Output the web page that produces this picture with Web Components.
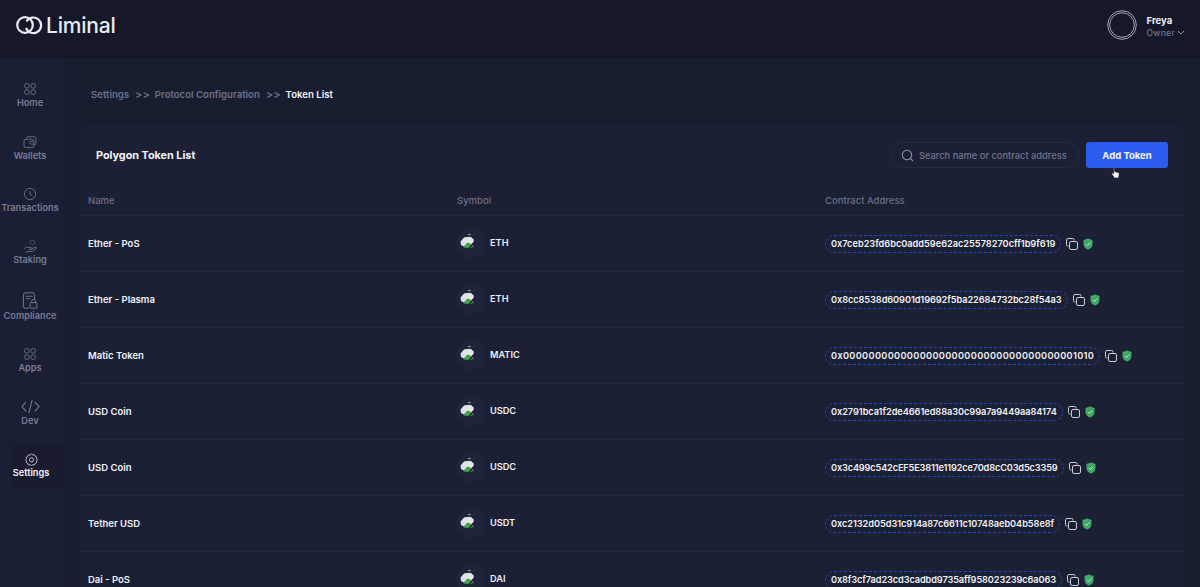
<!DOCTYPE html>
<html>
<head>
<meta charset="utf-8">
<title>Token List</title>
<style>
  html, body { margin: 0; height: 100%; overflow: hidden; background: #191d30; }
  body { font-family: Inter, "Noto Sans", sans-serif; }
</style>
</head>
<body>
<app-shell>
  <top-bar slot="top"></top-bar>
  <side-nav slot="side"></side-nav>
  <bread-crumbs slot="main"></bread-crumbs>
  <token-card slot="main">
    <token-row name="Ether - PoS" symbol="ETH" address="0x7ceb23fd6bc0add59e62ac25578270cff1b9f619"></token-row>
    <token-row name="Ether - Plasma" symbol="ETH" address="0x8cc8538d60901d19692f5ba22684732bc28f54a3" style="--track:-.07px"></token-row>
    <token-row name="Matic Token" symbol="MATIC" address="0x0000000000000000000000000000000000001010" style="--track:.33px"></token-row>
    <token-row name="USD Coin" symbol="USDC" address="0x2791bca1f2de4661ed88a30c99a7a9449aa84174" style="--track:-.05px"></token-row>
    <token-row name="USD Coin" symbol="USDC" address="0x3c499c542cEF5E3811e1192ce70d8cC03d5c3359" style="--track:-.15px"></token-row>
    <token-row name="Tether USD" symbol="USDT" address="0xc2132d05d31c914a87c6611c10748aeb04b58e8f" style="--track:-.05px"></token-row>
    <token-row name="Dai - PoS" symbol="DAI" address="0x8f3cf7ad23cd3cadbd9735aff958023239c6a063" style="--track:-.1px"></token-row>
  </token-card>
</app-shell>

<script>
const shellTemplate = document.createElement('template');
shellTemplate.innerHTML = `
<style>
  :host { display: grid; grid-template-rows: 58px 1fr; grid-template-columns: 66px 1fr; height: 587px; overflow: hidden; }
  .top { grid-column: 1 / 3; }
  .main { padding: 0 16px 0 14px; min-width: 0; }
</style>
<div class="top"><slot name="top"></slot></div>
<div class="side"><slot name="side"></slot></div>
<div class="main"><slot name="main"></slot></div>
`;

class AppShell extends HTMLElement {
  constructor() {
    super();
    this.attachShadow({mode: 'open'});
    this.shadowRoot.appendChild(shellTemplate.content.cloneNode(true));
  }
}

const topBarTemplate = document.createElement('template');
topBarTemplate.innerHTML = `
<style>
  :host { display: flex; align-items: center; justify-content: space-between; height: 58px; background: #151829; padding: 0 15px 8px 16px; box-sizing: border-box; }
  .logo { display: flex; align-items: center; gap: 3px; color: #e9ebf2; font-size: 21px; font-weight: 500; letter-spacing: -0.2px; }
  .user { display: flex; align-items: center; gap: 10px; }
  .who { display: flex; flex-direction: column; gap: 2px; margin-top: 2px; }
  .name { color: #eef0f6; font-size: 9.5px; font-weight: 700; }
  .role { display: flex; align-items: center; gap: 2px; color: #6f7389; font-size: 8.5px; font-weight: 500; letter-spacing: 0.3px; }
</style>
<div class="logo">
  <svg width="27" height="20" viewBox="0 0 27 20" fill="none" stroke="#e9ebf2" stroke-width="2.2">
    <circle cx="9" cy="10" r="7.800"/><path d="M10.500 6.500A7.800 7.800 0 1 1 10 13"/>
  </svg>
  <span>Liminal</span>
</div>
<div class="user">
  <svg width="30" height="30" viewBox="0 0 30 30" fill="none" stroke="#a3a6b2">
    <circle cx="15" cy="15" r="14.300" stroke-width="1"/><circle cx="15" cy="15" r="12.300" stroke-width="1"/>
  </svg>
  <div class="who">
    <span class="name">Freya</span>
    <span class="role">Owner
      <svg width="8" height="5" viewBox="0 0 8 5" fill="none" stroke="#8a8ea2" stroke-width="1"><path d="M1 1l3 3 3-3"/></svg>
    </span>
  </div>
</div>
`;

class TopBar extends HTMLElement {
  constructor() {
    super();
    this.attachShadow({mode: 'open'});
    this.shadowRoot.appendChild(topBarTemplate.content.cloneNode(true));
  }
}

const navIcons = {
  grid: '<circle cx="5.500" cy="5.500" r="3.400"/><circle cx="14.500" cy="5.500" r="3.400"/><circle cx="5.500" cy="14.500" r="3.400"/><circle cx="14.500" cy="14.500" r="3.400"/>',
  wallet: '<rect x="1.500" y="6" width="14" height="12" rx="2.500"/><path d="M5 6V4.500A2 2 0 0 1 7 2.500h9.500a2 2 0 0 1 2 2V12a2 2 0 0 1-3 1.800"/><path d="M15.500 9h-4a2 2 0 0 0 0 4h4"/>',
  clock: '<circle cx="10" cy="10" r="8"/><path d="M10 5.500V10l3 2.500"/>',
  staking: '<circle cx="12.500" cy="4.500" r="3" stroke-dasharray="2 1"/><path d="M1.500 13c2-2.500 4-2.500 6.500-1.500h3c1.500 0 1.500 2.200 0 2.200H8"/><path d="M11.500 13l5-2.200c1.500-.5 2.200 1 1 1.900L12 16.500H6l-3 1.500"/>',
  compliance: '<path d="M8.500 19H3.500A1.800 1.800 0 0 1 1.700 17.200V2.800A1.800 1.800 0 0 1 3.500 1h9.500a1.800 1.800 0 0 1 1.800 1.800V9"/><path d="M4.500 5h8M4.500 8h5"/><rect x="9.500" y="12.500" width="8" height="6.500" rx="1"/><path d="M11.300 12.500v-1.800a2.200 2.200 0 0 1 4.400 0v1.800"/>',
  code: '<path d="M5.500 4L1 9l4.500 5M14.500 4L19 9l-4.500 5M11.800 2L8.200 16"/>',
  gear: '<path d="M10 1.500l2 1.500 2.500-.2 1.200 2.200 2.200 1.200-.2 2.500L19 10.500l-1.300 1.800.2 2.500-2.200 1.200-1.200 2.200-2.500-.2-2 1.500-2-1.500-2.500.2-1.200-2.200-2.200-1.200.2-2.500L1 10.500l1.300-1.800-.2-2.500 2.200-1.200 1.200-2.200 2.500.2z"/><circle cx="10" cy="10.500" r="3.200"/>'
};

const navItemTemplate = document.createElement('template');
navItemTemplate.innerHTML = `
<style>
  :host { display: flex; flex-direction: column; align-items: center; box-sizing: border-box; width: 60px; color: #777b92; font-size: 9.200px; font-weight: 600; line-height: 11px; height: var(--h, 52px); }
  :host([active]) { color: #f2f3f8; background: #191c30; width: 55px; height: 43px; margin: -7px 0 0 11px; padding: 7px 15px 0 0; }
  .ico { display: flex; align-items: center; justify-content: center; height: var(--ih, 14px); margin-bottom: 1px; }
  svg { display: block; flex: none; fill: none; stroke: currentColor; stroke-width: 1.100; }
</style>
<div class="ico"><svg width="14" height="14" viewBox="0 0 20 20"></svg></div>
<slot></slot>
`;

class NavItem extends HTMLElement {
  constructor() {
    super();
    this.attachShadow({mode: 'open'});
    this.shadowRoot.appendChild(navItemTemplate.content.cloneNode(true));
    const svg = this.shadowRoot.querySelector('svg');
    svg.innerHTML = navIcons[this.getAttribute('icon')] || '';
    if (this.hasAttribute('size')) {
      svg.setAttribute('width', this.getAttribute('size'));
      svg.setAttribute('height', this.getAttribute('size'));
    }
  }
}

const sideNavTemplate = document.createElement('template');
sideNavTemplate.innerHTML = `
<style>
  :host { display: flex; flex-direction: column; height: 529px; background: #1b1f35; box-sizing: border-box; padding-top: 24px; }
</style>
<nav-item icon="grid" style="--h:53px">Home</nav-item>
<nav-item icon="wallet" size="14">Wallets</nav-item>
<nav-item icon="clock" size="14">Transactions</nav-item>
<nav-item icon="staking" size="15" style="--h:53px">Staking</nav-item>
<nav-item icon="compliance" size="17" style="--h:55px;--ih:17px">Compliance</nav-item>
<nav-item icon="grid" style="--h:53px">Apps</nav-item>
<nav-item icon="code" size="19">Dev</nav-item>
<nav-item icon="gear" size="13" active>Settings</nav-item>
`;

class SideNav extends HTMLElement {
  constructor() {
    super();
    this.attachShadow({mode: 'open'});
    this.shadowRoot.appendChild(sideNavTemplate.content.cloneNode(true));
  }
}

const crumbsTemplate = document.createElement('template');
crumbsTemplate.innerHTML = `
<style>
  :host { display: flex; align-items: center; box-sizing: border-box; height: 68px; padding: 4px 0 0 11px; font-size: 9.600px; font-weight: 600; color: #6c7088; }
  .sep { margin: 0 5px 0 6px; font-size: 11px; font-weight: 600; }
  .now { color: #f2f3f8; }
</style>
<span>Settings</span><span class="sep">&gt;&gt;</span><span>Protocol Configuration</span><span class="sep">&gt;&gt;</span><span class="now">Token List</span>
`;

class BreadCrumbs extends HTMLElement {
  constructor() {
    super();
    this.attachShadow({mode: 'open'});
    this.shadowRoot.appendChild(crumbsTemplate.content.cloneNode(true));
  }
}

const cardTemplate = document.createElement('template');
cardTemplate.innerHTML = `
<style>
  :host { display: block; background: #1c2035; border-radius: 6px; height: 470px; overflow: hidden; }
  .head { display: flex; align-items: center; height: 58px; padding: 0 16px; }
  h2 { margin: 0; flex: 1; color: #f2f3f8; font-size: 10.800px; font-weight: 700; }
  .search { display: flex; align-items: center; gap: 5px; box-sizing: border-box; width: 188px; height: 26px; border: 1px solid #262a40; border-radius: 13px; padding-left: 9px; color: #6f7389; font-size: 9.300px; font-weight: 500; white-space: nowrap; margin-right: 7px; }
  button { position: relative; width: 82px; height: 26px; border: 0; border-radius: 3px; background: #2c5bf0; color: #f5f6fb; font: 700 9.500px Inter, sans-serif; padding: 0; }
  .cursor { position: absolute; left: 25px; top: 24px; }
  .cols { display: grid; grid-template-columns: 369px 368px 1fr; box-sizing: border-box; height: 32px; align-items: center; padding: 1px 0 0 8px; border-bottom: 1px solid #252940; color: #6a6e85; font-size: 9.500px; font-weight: 500; }
</style>
<div class="head">
  <h2>Polygon Token List</h2>
  <div class="search">
    <svg width="13" height="13" viewBox="0 0 13 13" fill="none" stroke="#8a8ea2" stroke-width="1.100"><circle cx="6" cy="6" r="4.700"/><path d="M9.500 9.500l2.500 2.500"/></svg>
    Search name or contract address
  </div>
  <button>Add Token
    <svg class="cursor" width="9" height="13" viewBox="0 0 9 13"><path d="M2.500 1c.7 0 1 .5 1 1v3.500l3.500 1c1 .4 1.300 1 1.200 2l-.5 2.500c-.1.700-.5 1-1 1H4.200c-.5 0-.9-.3-1.200-.7L.7 8c-.4-.8.500-1.400 1.100-.8l.7.8V2c0-.5 0-1 0-1z" fill="#f2f3f6" stroke="#111" stroke-width=".5"/></svg>
  </button>
</div>
<div class="cols"><span>Name</span><span>Symbol</span><span>Contract Address</span></div>
<slot></slot>
`;

class TokenCard extends HTMLElement {
  constructor() {
    super();
    this.attachShadow({mode: 'open'});
    this.shadowRoot.appendChild(cardTemplate.content.cloneNode(true));
  }
}

const rowTemplate = document.createElement('template');
rowTemplate.innerHTML = `
<style>
  :host { display: grid; grid-template-columns: 369px 368px 1fr; height: 56px; box-sizing: border-box; align-items: center; padding-left: 8px; border-bottom: 1px solid #23273d; color: #eef0f6; font-size: 9.500px; font-weight: 600; }
  .symbol { display: flex; align-items: center; gap: 5px; font-size: 9.200px; margin-left: -1px; }
  .sym { margin-top: -2px; }
  .coin { display: flex; align-items: flex-start; box-sizing: border-box; padding: 5px 0 0 4px; width: 29px; height: 29px; border-radius: 50%; background: #20243a; }
  .addr { display: flex; align-items: center; }
  .pill { border: 1px dashed #2447b8; border-radius: 9px; padding: 0 5px; height: 16px; line-height: 16px; white-space: nowrap; font-size: 9.200px; letter-spacing: var(--track, 0); }
  .copy { margin-left: 5px; }
  .shield { margin-left: 5px; }
</style>
<span class="name"></span>
<div class="symbol">
  <span class="coin">
    <svg width="15" height="16" viewBox="0 0 14 15"><path d="M7 .5h3" stroke="#8d909e" stroke-width="1" fill="none"/><path d="M4 3l6-.5 3 3-1 5-6 2-5-2L.500 7z" fill="#dfe3e8"/><path d="M3 12l4-4 3 1 3 3-2 1H4z" fill="#47a04c"/><path d="M9 13l4-5" stroke="#1c2035" stroke-width="1.300"/></svg>
  </span>
  <span class="sym"></span>
</div>
<div class="addr">
  <span class="pill"></span>
  <svg class="copy" width="12" height="12" viewBox="0 0 12 12" fill="none" stroke="#c9ccd6" stroke-width="1"><rect x="3.500" y="3.500" width="8" height="8" rx="1.500"/><path d="M2.500 8H1.800A1.300 1.300 0 0 1 .5 6.700V1.800A1.300 1.300 0 0 1 1.800.5h4.900A1.300 1.300 0 0 1 8 1.800v.7"/></svg>
  <svg class="shield" width="10" height="12" viewBox="0 0 10 12"><path d="M5 .5l4.500 1.500v4c0 3-2 4.800-4.500 5.500C2.500 10.800.5 9 .5 6V2z" fill="#3fa866"/><path d="M3 6l1.500 1.500L7.200 4.500" fill="none" stroke="#cfeeda" stroke-width=".9"/></svg>
</div>
`;

class TokenRow extends HTMLElement {
  constructor() {
    super();
    this.attachShadow({mode: 'open'});
    this.shadowRoot.appendChild(rowTemplate.content.cloneNode(true));
    this.shadowRoot.querySelector('.name').textContent = this.getAttribute('name');
    this.shadowRoot.querySelector('.sym').textContent = this.getAttribute('symbol');
    this.shadowRoot.querySelector('.pill').textContent = this.getAttribute('address');
  }
}

customElements.define('nav-item', NavItem);
customElements.define('app-shell', AppShell);
customElements.define('top-bar', TopBar);
customElements.define('side-nav', SideNav);
customElements.define('bread-crumbs', BreadCrumbs);
customElements.define('token-card', TokenCard);
customElements.define('token-row', TokenRow);
</script>
</body>
</html>
